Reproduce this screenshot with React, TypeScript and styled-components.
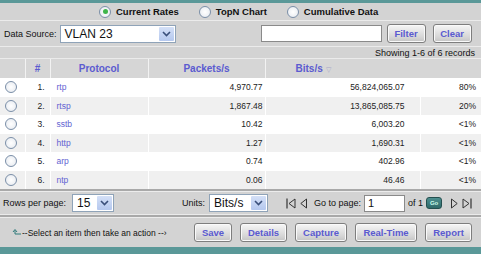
import React from 'react';
import styled, { createGlobalStyle } from 'styled-components';

const Global = createGlobalStyle`
  html, body { margin: 0; padding: 0; background: #ffffff; }
  body { font-family: "Liberation Sans", Arial, sans-serif; }
`;

const Page = styled.div`
  width: 481px;
  height: 254px;
  display: flex;
  flex-direction: column;
  background: #d3d3d3;
  overflow: hidden;
`;

const TealBar = styled.div<{ $h: number }>`
  height: ${(p) => p.$h}px;
  flex-shrink: 0;
  background: #5a9898;
`;

const Bar = styled.div<{ $h: number }>`
  height: ${(p) => p.$h}px;
  flex-shrink: 0;
  display: flex;
  align-items: center;
  box-sizing: border-box;
  background: #d3d3d3;
  border-bottom: 1px solid #ebebeb;
`;

const RadioBar = styled(Bar)`
  gap: 20px;
  padding-left: 99px;
`;

const RadioItem = styled.label`
  display: flex;
  align-items: center;
  gap: 5px;
  font-size: 9.5px;
  font-weight: bold;
  color: #111;
`;

const RadioDot = styled.span<{ $on?: boolean }>`
  width: 10px;
  height: 10px;
  border-radius: 50%;
  border: 1px solid #7b8fa8;
  background: radial-gradient(circle, #ffffff 0%, #e4e8ee 100%);
  display: inline-flex;
  align-items: center;
  justify-content: center;
  &::after {
    content: '';
    width: 5px;
    height: 5px;
    border-radius: 50%;
    background: ${(p) => (p.$on ? '#3fb54a' : 'transparent')};
  }
`;

const FilterBar = styled(Bar)`
  padding: 0 9px 0 4px;
`;

const Label = styled.span`
  font-size: 9px;
  color: #111;
  white-space: nowrap;
`;

const Select = styled.div<{ $w: number; $ml?: number }>`
  width: ${(p) => p.$w}px;
  height: 18px;
  box-sizing: border-box;
  display: flex;
  align-items: stretch;
  background: #fff;
  border: 1px solid #8fa3b8;
  margin-left: ${(p) => p.$ml ?? 3}px;
`;

const SelectText = styled.span`
  flex: 1;
  font-size: 12px;
  line-height: 16px;
  padding-left: 4px;
  color: #111;
`;

const SelectArrow = styled.span`
  width: 15px;
  background: linear-gradient(#d4e0f7, #b5c8ee);
  display: flex;
  align-items: center;
  justify-content: center;
  margin: 1px;
  border-radius: 1px;
`;

const TextInput = styled.div<{ $w: number }>`
  width: ${(p) => p.$w}px;
  height: 17px;
  box-sizing: border-box;
  background: #fff;
  border: 1px solid #8a8a8a;
  font-size: 11px;
  line-height: 15px;
  padding-left: 3px;
  color: #111;
`;

const Button = styled.button<{ $w: number }>`
  width: ${(p) => p.$w}px;
  height: 19px;
  padding: 0;
  font-family: "Liberation Sans", Arial, sans-serif;
  font-size: 9.5px;
  font-weight: bold;
  color: #5a5ad0;
  border: 1px solid #7e7e7e;
  border-radius: 3px;
  background: linear-gradient(#f6f6f6, #d6d6d6 70%, #c4c4c4);
  box-shadow: inset 0 0 0 1px #fafafa;
`;

const InfoBar = styled(Bar)`
  justify-content: flex-end;
  padding-right: 6px;
`;

const Grid = styled.table`
  border-collapse: collapse;
  width: 481px;
  table-layout: fixed;
  flex-shrink: 0;
`;

const HeadCell = styled.th<{ $align?: string; $pad?: number }>`
  height: 19px;
  padding: 0 0 0 ${(p) => p.$pad ?? 0}px;
  background: #d6d6d6;
  border-left: 1px solid #f2f2f2;
  font-size: 10px;
  font-weight: bold;
  color: #5b5bd0;
  text-align: ${(p) => p.$align ?? 'center'};
  &:first-child { border-left: none; }
`;

const SortMark = styled.span`
  color: #a8a8c8;
  font-weight: normal;
  font-size: 7px;
`;

const Row = styled.tr<{ $odd: boolean }>`
  height: 18.5px;
  background: ${(p) => (p.$odd ? '#f0f0f0' : '#ffffff')};
`;

const Cell = styled.td<{ $align?: string; $pr?: number; $pl?: number }>`
  height: 18.5px;
  padding: 0 ${(p) => p.$pr ?? 0}px 0 ${(p) => p.$pl ?? 0}px;
  font-size: 8.5px;
  line-height: 10px;
  color: #222;
  text-align: ${(p) => p.$align ?? 'left'};
  border-left: 1px solid #ffffff;
  white-space: nowrap;
  &:first-child { border-left: none; }
`;

const ProtoLink = styled.a`
  color: #6262d2;
  text-decoration: none;
  font-size: 8.5px;
`;

const RowRadio = styled.span`
  display: block;
  width: 10px;
  height: 10px;
  margin-left: 5px;
  border-radius: 50%;
  border: 1px solid #7b8fa8;
  background: radial-gradient(circle, #ffffff 0%, #e4e8ee 100%);
`;

const Divider = styled.div`
  height: 2px;
  flex-shrink: 0;
  background: #a9a9a9;
  border-bottom: 1px solid #ececec;
`;

const PagerBar = styled(Bar)`
  padding: 0 6px 0 3px;
`;

const Spacer = styled.div<{ $w: number }>`
  width: ${(p) => p.$w}px;
  flex-shrink: 0;
`;

const PagerIcons = styled.span`
  display: flex;
  align-items: center;
  gap: 4px;
`;

const GoButton = styled.span`
  width: 14px;
  height: 10px;
  border-radius: 3px;
  background: linear-gradient(#4d8f8f, #2f6a6a);
  border: 1px solid #244f4f;
  color: #cfe;
  font-size: 6px;
  font-weight: bold;
  display: flex;
  align-items: center;
  justify-content: center;
  margin: 0 9px 0 3px;
`;

const ActionBar = styled(Bar)`
  border-bottom: none;
  padding: 0 9px 0 12px;
`;

const Hint = styled.span`
  display: flex;
  align-items: center;
  gap: 1px;
  font-size: 8.5px;
  color: #111;
  flex: 1;
`;

const ButtonRow = styled.div`
  display: flex;
  gap: 8px;
`;

const Chevron = () => (
  <svg width="9" height="6" viewBox="0 0 9 6">
    <path d="M1 1 L4.5 4.5 L8 1" fill="none" stroke="#3a4f7a" strokeWidth="1.6" />
  </svg>
);

const FirstIcon = () => (
  <svg width="10" height="11" viewBox="0 0 10 11">
    <path d="M1 0.5 V10.5" stroke="#333" strokeWidth="1.2" />
    <path d="M9 1 L3 5.5 L9 10 Z" fill="none" stroke="#333" strokeWidth="1" />
  </svg>
);

const PrevIcon = () => (
  <svg width="7" height="11" viewBox="0 0 7 11">
    <path d="M6.5 1 L0.8 5.5 L6.5 10 Z" fill="none" stroke="#333" strokeWidth="1" />
  </svg>
);

const NextIcon = () => (
  <svg width="7" height="11" viewBox="0 0 7 11">
    <path d="M0.5 1 L6.2 5.5 L0.5 10 Z" fill="none" stroke="#333" strokeWidth="1" />
  </svg>
);

const LastIcon = () => (
  <svg width="10" height="11" viewBox="0 0 10 11">
    <path d="M1 1 L7 5.5 L1 10 Z" fill="none" stroke="#333" strokeWidth="1" />
    <path d="M9 0.5 V10.5" stroke="#333" strokeWidth="1.2" />
  </svg>
);

const BackArrow = () => (
  <svg width="9" height="7" viewBox="0 0 9 7">
    <path d="M9 5 H3 V1.5" fill="none" stroke="#2f7a7a" strokeWidth="1" />
    <path d="M1 3 L3 0.5 L5 3" fill="none" stroke="#2f7a7a" strokeWidth="1" />
  </svg>
);

const rows = [
  { proto: 'rtp', pkts: '4,970.77', bits: '56,824,065.07', pct: '80%' },
  { proto: 'rtsp', pkts: '1,867.48', bits: '13,865,085.75', pct: '20%' },
  { proto: 'sstb', pkts: '10.42', bits: '6,003.20', pct: '<1%' },
  { proto: 'http', pkts: '1.27', bits: '1,690.31', pct: '<1%' },
  { proto: 'arp', pkts: '0.74', bits: '402.96', pct: '<1%' },
  { proto: 'ntp', pkts: '0.06', bits: '46.46', pct: '<1%' },
];

export default function App() {
  return (
    <Page>
      <Global />
      <TealBar $h={3} />
      <RadioBar $h={18}>
        <RadioItem><RadioDot $on />Current Rates</RadioItem>
        <RadioItem><RadioDot />TopN Chart</RadioItem>
        <RadioItem><RadioDot />Cumulative Data</RadioItem>
      </RadioBar>
      <FilterBar $h={26}>
        <Label>Data Source:</Label>
        <Select $w={116}>
          <SelectText>VLAN 23</SelectText>
          <SelectArrow><Chevron /></SelectArrow>
        </Select>
        <Spacer $w={85} />
        <TextInput $w={121} />
        <Spacer $w={5} />
        <Button $w={39}>Filter</Button>
        <Spacer $w={7} />
        <Button $w={39}>Clear</Button>
      </FilterBar>
      <InfoBar $h={12}>
        <Label>Showing 1-6 of 6 records</Label>
      </InfoBar>
      <Grid>
        <colgroup>
          <col style={{ width: 25 }} />
          <col style={{ width: 25 }} />
          <col style={{ width: 98 }} />
          <col style={{ width: 117 }} />
          <col style={{ width: 155 }} />
          <col style={{ width: 61 }} />
        </colgroup>
        <thead>
          <tr>
            <HeadCell />
            <HeadCell>#</HeadCell>
            <HeadCell>Protocol</HeadCell>
            <HeadCell>Packets/s</HeadCell>
            <HeadCell colSpan={2} $align="left" $pad={30}>
              Bits/s <SortMark>▽</SortMark>
            </HeadCell>
          </tr>
        </thead>
        <tbody>
          {rows.map((r, i) => (
            <Row key={r.proto} $odd={i % 2 === 1}>
              <Cell><RowRadio /></Cell>
              <Cell $align="right" $pr={5}>{i + 1}.</Cell>
              <Cell $pl={6}><ProtoLink>{r.proto}</ProtoLink></Cell>
              <Cell $align="right" $pr={2}>{r.pkts}</Cell>
              <Cell $align="right" $pr={15}>{r.bits}</Cell>
              <Cell $align="right" $pr={5}>{r.pct}</Cell>
            </Row>
          ))}
        </tbody>
      </Grid>
      <Divider />
      <PagerBar $h={23}>
        <Label>Rows per page:</Label>
        <Select $w={42} $ml={6}>
          <SelectText>15</SelectText>
          <SelectArrow><Chevron /></SelectArrow>
        </Select>
        <Spacer $w={68} />
        <Label>Units:</Label>
        <Select $w={59} $ml={4}>
          <SelectText>Bits/s</SelectText>
          <SelectArrow><Chevron /></SelectArrow>
        </Select>
        <Spacer $w={18} />
        <PagerIcons>
          <FirstIcon />
          <PrevIcon />
        </PagerIcons>
        <Spacer $w={7} />
        <Label>Go to page:</Label>
        <Spacer $w={3} />
        <TextInput $w={41}>1</TextInput>
        <Spacer $w={3} />
        <Label>of 1</Label>
        <GoButton>Go</GoButton>
        <PagerIcons>
          <NextIcon />
          <LastIcon />
        </PagerIcons>
      </PagerBar>
      <Divider />
      <ActionBar $h={29}>
        <Hint>
          <BackArrow />
          --Select an item then take an action --›
        </Hint>
        <ButtonRow>
          <Button $w={38}>Save</Button>
          <Button $w={47}>Details</Button>
          <Button $w={52}>Capture</Button>
          <Button $w={62}>Real-Time</Button>
          <Button $w={47}>Report</Button>
        </ButtonRow>
      </ActionBar>
      <TealBar $h={7} />
    </Page>
  );
}
